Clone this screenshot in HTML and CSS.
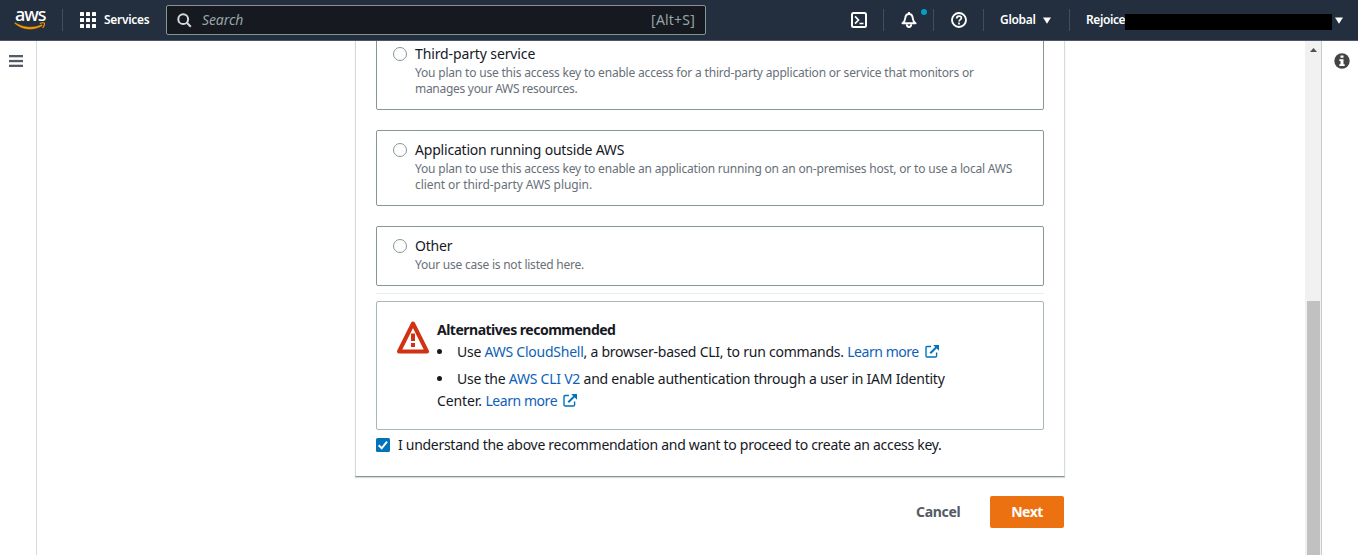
FILE: index.html
```html
<!DOCTYPE html>
<html lang="en">
<head>
<meta charset="utf-8">
<title>Create access key</title>
<link rel="stylesheet" href="styles.css">
</head>
<body>
<header class="topbar">
  <div class="logo">
    <span class="logo-text">aws</span>
    <svg class="logo-smile" width="32" height="9" viewBox="0 0 32 9"><path d="M.6 1.2C8.500 8.200 20 8.800 28.300 3.600l-.6-.9C19.500 6.600 9.500 6 1 .7z" fill="#f90" stroke="#f90" stroke-width=".5"/><path d="M25.800 1.500c1.600-.9 4-.9 4.500-.4.500.6-.1 3.300-1.700 4.800" fill="none" stroke="#f90" stroke-width="1.200"/></svg>
  </div>
  <i class="sep"></i>
  <div class="services">
    <svg width="16" height="16" viewBox="0 0 16 16" fill="#fff"><rect width="4" height="4" rx=".6"/><rect x="6" width="4" height="4" rx=".6"/><rect x="12" width="4" height="4" rx=".6"/><rect y="6" width="4" height="4" rx=".6"/><rect x="6" y="6" width="4" height="4" rx=".6"/><rect x="12" y="6" width="4" height="4" rx=".6"/><rect y="12" width="4" height="4" rx=".6"/><rect x="6" y="12" width="4" height="4" rx=".6"/><rect x="12" y="12" width="4" height="4" rx=".6"/></svg>
    <span class="services-label">Services</span>
  </div>
  <div class="search">
    <svg width="15" height="15" viewBox="0 0 15 15" fill="none" stroke="#d5dbdb" stroke-width="2"><circle cx="6.200" cy="6.200" r="4.900"/><path d="M9.800 9.800l4 4"/></svg>
    <span class="search-label">Search</span>
    <span class="search-key">[Alt+S]</span>
  </div>
  <div class="tools">
    <div class="tool"><svg width="16" height="16" viewBox="0 0 16 16" fill="none" stroke="#fff" stroke-width="2"><rect x="1" y="1" width="14" height="14" rx="1.500"/><path d="M4 4.300L7.500 8 4 11.700M8.500 11.500h4" stroke-width="1.700"/></svg></div>
    <i class="sep"></i>
    <div class="tool bell"><svg width="16" height="16" viewBox="0 0 16 16" fill="none" stroke="#fff" stroke-width="1.900"><path d="M8 0v2M1.400 11.300h13.200C12.300 9.800 12 8.300 11.800 6.300 11.500 3.500 10.200 2 8 2S4.500 3.500 4.200 6.300C4 8.300 3.700 9.800 1.400 11.300z" stroke-linejoin="round"/><path d="M5.800 12.300c0 3.600 4.400 3.600 4.400 0"/></svg><i class="bell-dot"></i></div>
    <i class="sep"></i>
    <div class="tool"><svg width="16" height="16" viewBox="0 0 16 16" fill="none" stroke="#fff" stroke-width="1.900"><circle cx="8" cy="8" r="7"/><path d="M5.700 6.500c0-1.500 1-2.400 2.400-2.400s2.300.8 2.300 2c0 1.600-2.300 1.500-2.300 3.400M8 10.600v1.800" stroke-width="1.700"/></svg></div>
    <i class="sep"></i>
    <div class="region"><span class="region-label">Global</span><svg width="8" height="7" viewBox="0 0 8 7"><path d="M0 .5h8L4 6.700z" fill="#fff"/></svg></div>
    <i class="sep"></i>
    <div class="account"><span class="account-label">Rejoice</span><span class="redacted"></span><svg width="8" height="7" viewBox="0 0 8 7"><path d="M0 .5h8L4 6.700z" fill="#fff"/></svg></div>
  </div>
</header>
<div class="shell">
  <nav class="left-rail"><svg width="14" height="12" viewBox="0 0 14 12" fill="#545b64"><rect width="14" height="2.300"/><rect y="4.900" width="14" height="2.300"/><rect y="9.700" width="14" height="2.300"/></svg></nav>
  <main class="content">
    <section class="card">
      <div class="tiles">
        <label class="tile"><i class="radio"></i><span class="tile-text"><span class="tile-title t-third">Third-party service</span><span class="tile-desc">You plan to use this access key to enable access for a third-party application or service that monitors or<br><span class="d-third-end">manages your AWS resources.</span></span></span></label>
        <label class="tile"><i class="radio"></i><span class="tile-text"><span class="tile-title">Application running outside AWS</span><span class="tile-desc">You plan to use this access key to enable an application running on an on-premises host, or to use a local AWS<br><span class="d-app-end">client or third-party AWS plugin.</span></span></span></label>
        <label class="tile"><i class="radio"></i><span class="tile-text"><span class="tile-title">Other</span><span class="tile-desc d-other">Your use case is not listed here.</span></span></label>
      </div>
      <hr class="divider">
      <div class="alert">
        <svg class="warn" width="32" height="33" viewBox="0 0 32 33"><path d="M16 2.500L30 30.500H2z" fill="none" stroke="#d13212" stroke-width="4" stroke-linejoin="round"/><path d="M14 12.500h4v7.500h-4zM14 22h4v4h-4z" fill="#d13212"/></svg>
        <div class="alert-body">
          <strong class="alert-title">Alternatives recommended</strong>
          <ul class="alert-list">
            <li><span class="l-one">Use <a>AWS CloudShell</a>, a browser-based CLI, to run commands. <a class="more">Learn more</a></span><svg class="ext" width="14" height="13" viewBox="0 0 14 13"><path d="M6 1.500H2.200Q1 1.500 1 2.700v8.100Q1 12 2.200 12h8.200q1.200 0 1.200-1.200V7.500" fill="none" stroke="#0073bb" stroke-width="1.400"/><path d="M5.300 8.300L12 1.600" stroke="#0073bb" stroke-width="2"/><path d="M8.200 0H14v5.800z" fill="#0073bb"/></svg></li>
            <li><span class="l-two">Use the <a>AWS CLI V2</a> and enable authentication through a user in IAM Identity</span><br><span class="l-three">Center. <a class="more">Learn more</a></span><svg class="ext" width="14" height="13" viewBox="0 0 14 13"><path d="M6 1.500H2.200Q1 1.500 1 2.700v8.100Q1 12 2.200 12h8.200q1.200 0 1.200-1.200V7.500" fill="none" stroke="#0073bb" stroke-width="1.400"/><path d="M5.300 8.300L12 1.600" stroke="#0073bb" stroke-width="2"/><path d="M8.200 0H14v5.800z" fill="#0073bb"/></svg></li>
          </ul>
        </div>
      </div>
      <label class="confirm"><svg width="14" height="14" viewBox="0 0 14 14"><rect width="14" height="14" rx="1.500" fill="#0073bb"/><path d="M2.700 7.300l3 3L11 3.700" fill="none" stroke="#fff" stroke-width="2"/></svg><span class="confirm-label">I understand the above recommendation and want to proceed to create an access key.</span></label>
    </section>
    <div class="actions"><span class="cancel">Cancel</span><span class="next"><span class="next-label">Next</span></span></div>
  </main>
  <div class="scrollbar"><svg width="7" height="4" viewBox="0 0 7 4"><path d="M3.500 0L7 4H0z" fill="#505050"/></svg><i class="thumb"></i></div>
  <aside class="right-rail"><svg width="16" height="16" viewBox="0 0 16 16"><circle cx="8" cy="8" r="7.700" fill="#444"/><path d="M6.500 2.500h3v2.300h-3zM5.300 6.200h4.200v5h1.200v1.900H5.300v-1.900h1.200V8.100H5.300z" fill="#fff"/></svg></aside>
</div>
</body>
</html>
```
FILE: styles.css
```css
* { box-sizing: border-box; }
html, body { height: 100%; overflow: hidden; }
body { margin: 0; display: flex; flex-direction: column; background: #fff; color: #16191f; font: 14px/22px "Noto Sans", "Open Sans", sans-serif; white-space: nowrap; }
svg { display: block; flex: none; }
i { font-style: normal; }
span { flex: none; }

.topbar { flex: none; height: 41px; background: #232f3e; border-bottom: 1px solid #4b5563; display: flex; align-items: center; color: #fff; font-size: 12px; font-weight: 600; }
.sep { flex: none; width: 1px; height: 22px; background: #414d5c; }
.logo { width: 62px; height: 40px; padding: 9px 0 0 14px; }
.logo-text { display: block; height: 13px; font: 500 18px/11px "Noto Sans", sans-serif; letter-spacing: -1px; padding-left: 1px; }
.services { display: flex; align-items: center; gap: 8px; width: 103px; padding-left: 17px; }
.services-label { letter-spacing: -.3px; }
.search { width: 540px; height: 30px; border: 1px solid #879596; border-radius: 2px; background: #16191f; display: flex; align-items: center; padding: 0 10px; color: #95a5a6; font-size: 14px; font-weight: 400; }
.search-label { font-style: italic; margin-left: 10px; letter-spacing: -.1px; }
.search-key { margin-left: auto; letter-spacing: .2px; }
.tools { flex: 1; display: flex; align-items: center; padding-left: 128px; }
.tool { width: 49px; display: flex; justify-content: center; position: relative; }
.bell-dot { position: absolute; top: -3px; right: 6px; width: 6px; height: 6px; border-radius: 50%; background: #00a1c9; }
.region { width: 85px; padding-left: 16px; display: flex; align-items: center; gap: 7px; }
.region-label { width: 36px; letter-spacing: -.3px; }
.account { flex: 1; padding-left: 16px; display: flex; align-items: center; }
.account-label { width: 39px; letter-spacing: -.4px; }
.redacted { width: 207px; height: 16px; margin: 3px 3px 0 0; background: #000; }

.shell { flex: 1; min-height: 0; display: flex; }
.left-rail { width: 37px; border-right: 1px solid #d5dbdb; padding: 14px 0 0 9px; }
.content { flex: 1; overflow: hidden; padding-left: 318px; }
.card { width: 710px; height: 443px; margin-top: -7px; padding: 0 20px; border: 1px solid #d5dbdb; border-top: 0; border-bottom-color: #879596; box-shadow: 0 1px 1px rgba(0, 28, 36, .15); }
.tiles { display: grid; grid-template-columns: minmax(0, 1fr); gap: 20px; }
.tile { display: flex; gap: 8px; padding: 8px 16px 12px; border: 1px solid #879596; border-radius: 2px; }
.radio { flex: none; width: 14px; height: 14px; margin-top: 4px; border: 1px solid #879596; border-radius: 50%; }
.tile-text, .tile-title, .tile-desc { display: block; }
.tile-title { letter-spacing: -.2px; }
.t-third { letter-spacing: -.12px; }
.tile-desc { color: #687078; font-size: 12px; line-height: 16px; letter-spacing: -.19px; }
.d-third-end { letter-spacing: -.29px; }
.d-app-end { letter-spacing: -.07px; }
.d-other { letter-spacing: -.23px; }
.divider { height: 1px; margin: 7px 0; border: 0; background: #eaeded; }
.alert { height: 129px; display: flex; gap: 8px; padding: 17px 20px; border: 1px solid #aab7b8; border-radius: 2px; }
.warn { margin-top: 2px; }
.alert-title { display: block; font-weight: 700; letter-spacing: -.5px; }
.alert-list { margin: 0; padding: 0; display: grid; gap: 5px; list-style: none; }
.alert-list li::before { content: ""; display: inline-block; width: 5px; height: 5px; border-radius: 50%; background: #16191f; margin-right: 15px; vertical-align: 3px; }
.l-one, .l-two { letter-spacing: -.24px; }
.l-three { letter-spacing: -.1px; }
a { color: #0f5fb8; }
.more { letter-spacing: -.45px; }
.ext { display: inline-block; margin-left: 6px; vertical-align: -1px; }
.confirm { display: flex; align-items: center; gap: 8px; padding-top: 4px; }
.confirm-label { letter-spacing: -.29px; }
.actions { display: flex; align-items: center; width: 709px; margin-top: 19px; padding-left: 561px; font-weight: 700; color: #545b64; }
.cancel { width: 74px; letter-spacing: -.3px; }
.next { width: 74px; height: 32px; display: grid; place-items: center; background: #ec7211; border-radius: 2px; color: #fff; }
.next-label { letter-spacing: -.5px; }

.scrollbar { width: 16px; background: #f1f1f1; display: flex; flex-direction: column; align-items: center; padding-top: 7px; }
.thumb { flex: 1; width: 13px; margin-top: 249px; background: #c1c1c1; }
.right-rail { width: 37px; border-left: 1px solid #c8cccc; padding: 12px 0 0 12px; }
```
